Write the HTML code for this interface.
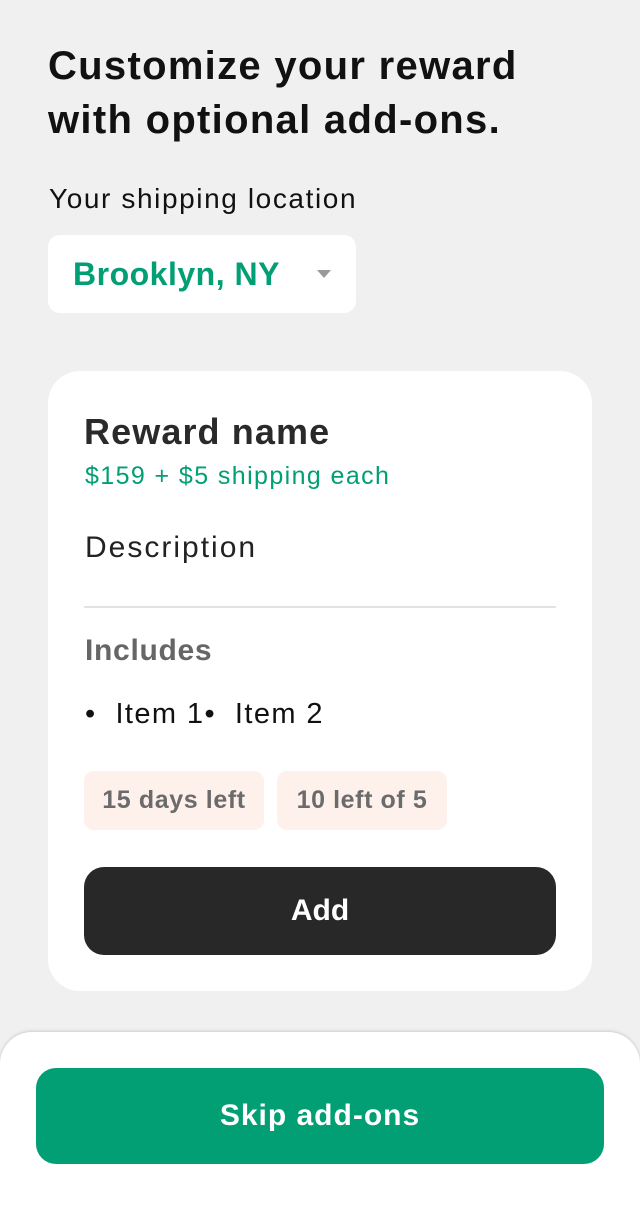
<!DOCTYPE html>
<html><head><style>
*{margin:0;padding:0;box-sizing:border-box}
body{width:640px;height:1200px;background:#f0f0f0;font-family:"Liberation Sans",sans-serif;position:relative;overflow:hidden}
.a{position:absolute;white-space:nowrap}
</style></head><body>
<div class="a" style="left:48px;top:39px;font-size:40px;letter-spacing:1.3px;font-weight:bold;line-height:54px;color:#111">Customize your reward<br>with optional add-ons.</div>
<div class="a" style="left:49px;top:183px;font-size:28px;letter-spacing:1.6px;color:#111">Your shipping location</div>
<div class="a" style="left:48px;top:235px;width:308px;height:78px;background:#fff;border-radius:12px">
<div class="a" style="left:25px;top:21px;font-size:32px;letter-spacing:0.5px;font-weight:bold;color:#029e74">Brooklyn, NY</div>
<div class="a" style="left:269px;top:35px;width:0;height:0;border-left:7px solid transparent;border-right:7px solid transparent;border-top:8px solid #999"></div>
</div>
<div class="a" style="left:48px;top:371px;width:544px;height:620px;background:#fff;border-radius:32px">
<div class="a" style="left:36px;top:40px;font-size:36px;letter-spacing:1.1px;font-weight:bold;color:#2a2a2a">Reward name</div>
<div class="a" style="left:37px;top:91px;font-size:25px;letter-spacing:1.4px;color:#029e74">$159 + $5 shipping each</div>
<div class="a" style="left:37px;top:160px;font-size:30px;letter-spacing:2px;color:#222">Description</div>
<div class="a" style="left:36px;top:235px;width:472px;height:2px;background:#e2e2e2"></div>
<div class="a" style="left:37px;top:263px;font-size:30px;letter-spacing:0.7px;font-weight:bold;color:#666">Includes</div>
<div class="a" style="left:37px;top:327px;font-size:29px;letter-spacing:1.4px;color:#111">•&nbsp; Item 1•&nbsp; Item 2</div>
<div class="a" style="left:36px;top:400px;width:180px;height:59px;background:#fef0eb;border-radius:10px;font-size:25px;letter-spacing:0.6px;font-weight:bold;color:#6b6b6b;text-align:center;line-height:59px">15 days left</div>
<div class="a" style="left:229px;top:400px;width:170px;height:59px;background:#fef0eb;border-radius:10px;font-size:25px;letter-spacing:0.6px;font-weight:bold;color:#6b6b6b;text-align:center;line-height:59px">10 left of 5</div>
<div class="a" style="left:36px;top:496px;width:472px;height:88px;background:#282828;border-radius:20px;color:#fff;font-size:30px;font-weight:bold;text-align:center;line-height:88px">Add</div>
</div>
<div class="a" style="left:0;top:1032px;width:640px;height:200px;background:#fff;border-radius:32px 32px 0 0;box-shadow:0 -1px 3px rgba(0,0,0,0.15)">
<div class="a" style="left:36px;top:36px;width:568px;height:96px;background:#029e74;border-radius:20px;color:#fff;font-size:30px;letter-spacing:1px;font-weight:bold;text-align:center;line-height:96px">Skip add-ons</div>
</div>
</body></html>
